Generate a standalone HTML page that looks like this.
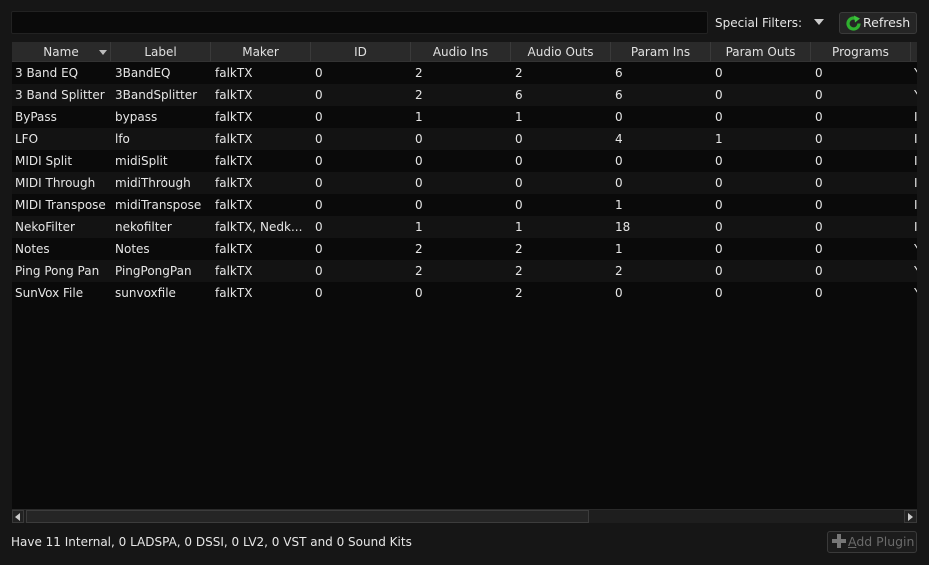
<!DOCTYPE html>
<html><head><style>
*{margin:0;padding:0;box-sizing:border-box}
body{width:929px;height:565px;background:#161616;font-family:"DejaVu Sans","Liberation Sans",sans-serif;font-size:12px;color:#e6e6e6;position:relative;overflow:hidden}
.a{position:absolute}
.search{left:11px;top:11px;width:697px;height:23px;background:#0a0a0a;border:1px solid #222;border-radius:2px}
.tbl{left:12px;top:42px;width:905px;height:468px;background:#0a0a0a;overflow:hidden}
.hdr{position:absolute;top:0;height:20px;background:#2a2a2a;border-right:1px solid #3a3a3a;border-bottom:1px solid #333;text-align:center;line-height:21px;color:#e0e0e0}
.row{position:absolute;left:0;width:905px;height:22px;line-height:22px}
.row.o{background:#131313}
.row span{position:absolute;white-space:nowrap}
.btn{border:1px solid #3a3a3a;border-radius:3px;background:#252525}
</style></head><body>
<div class="a search"></div>
<div class="a" style="left:715px;top:15px;line-height:16px">Special Filters:</div>
<div class="a" style="left:814px;top:19px;width:0;height:0;border-left:5px solid transparent;border-right:5px solid transparent;border-top:6px solid #ccc"></div>
<div class="a btn" style="left:839px;top:12px;width:78px;height:22px"></div>
<svg class="a" style="left:845px;top:15px" width="17" height="17" viewBox="0 0 17 17"><path d="M14 8.5A5.5 5.5 0 1 1 11 3.6" fill="none" stroke="#2fb02f" stroke-width="3.2"/><path d="M9 0.5L15 3.5L10 7.5Z" fill="#3cc43c"/></svg>
<div class="a" style="left:863px;top:15px;line-height:16px;font-size:12.5px">Refresh</div>
<div class="a tbl">
<div class="hdr" style="left:0;width:99px">Name</div>
<div class="a" style="left:87px;top:8px;border-left:4px solid transparent;border-right:4px solid transparent;border-top:5px solid #bbb"></div>
<div class="hdr" style="left:99px;width:100px">Label</div>
<div class="hdr" style="left:199px;width:100px">Maker</div>
<div class="hdr" style="left:299px;width:100px">ID</div>
<div class="hdr" style="left:399px;width:100px">Audio Ins</div>
<div class="hdr" style="left:499px;width:100px">Audio Outs</div>
<div class="hdr" style="left:599px;width:100px">Param Ins</div>
<div class="hdr" style="left:699px;width:100px">Param Outs</div>
<div class="hdr" style="left:799px;width:100px">Programs</div>
<div class="hdr" style="left:899px;width:10px"></div>
</div>
<div class="a" style="left:12px;top:62px;width:905px;height:242px;overflow:hidden">
<div class="row" style="top:0"><span style="left:3px">3 Band EQ</span><span style="left:103px">3BandEQ</span><span style="left:203px">falkTX</span><span style="left:303px">0</span><span style="left:403px">2</span><span style="left:503px">2</span><span style="left:603px">6</span><span style="left:703px">0</span><span style="left:803px">0</span><span style="left:902px">Y</span></div>
<div class="row o" style="top:22px"><span style="left:3px">3 Band Splitter</span><span style="left:103px">3BandSplitter</span><span style="left:203px">falkTX</span><span style="left:303px">0</span><span style="left:403px">2</span><span style="left:503px">6</span><span style="left:603px">6</span><span style="left:703px">0</span><span style="left:803px">0</span><span style="left:902px">Y</span></div>
<div class="row" style="top:44px"><span style="left:3px">ByPass</span><span style="left:103px">bypass</span><span style="left:203px">falkTX</span><span style="left:303px">0</span><span style="left:403px">1</span><span style="left:503px">1</span><span style="left:603px">0</span><span style="left:703px">0</span><span style="left:803px">0</span><span style="left:902px">I</span></div>
<div class="row o" style="top:66px"><span style="left:3px">LFO</span><span style="left:103px">lfo</span><span style="left:203px">falkTX</span><span style="left:303px">0</span><span style="left:403px">0</span><span style="left:503px">0</span><span style="left:603px">4</span><span style="left:703px">1</span><span style="left:803px">0</span><span style="left:902px">I</span></div>
<div class="row" style="top:88px"><span style="left:3px">MIDI Split</span><span style="left:103px">midiSplit</span><span style="left:203px">falkTX</span><span style="left:303px">0</span><span style="left:403px">0</span><span style="left:503px">0</span><span style="left:603px">0</span><span style="left:703px">0</span><span style="left:803px">0</span><span style="left:902px">I</span></div>
<div class="row o" style="top:110px"><span style="left:3px">MIDI Through</span><span style="left:103px">midiThrough</span><span style="left:203px">falkTX</span><span style="left:303px">0</span><span style="left:403px">0</span><span style="left:503px">0</span><span style="left:603px">0</span><span style="left:703px">0</span><span style="left:803px">0</span><span style="left:902px">I</span></div>
<div class="row" style="top:132px"><span style="left:3px">MIDI Transpose</span><span style="left:103px">midiTranspose</span><span style="left:203px">falkTX</span><span style="left:303px">0</span><span style="left:403px">0</span><span style="left:503px">0</span><span style="left:603px">1</span><span style="left:703px">0</span><span style="left:803px">0</span><span style="left:902px">I</span></div>
<div class="row o" style="top:154px"><span style="left:3px">NekoFilter</span><span style="left:103px">nekofilter</span><span style="left:203px">falkTX, Nedk...</span><span style="left:303px">0</span><span style="left:403px">1</span><span style="left:503px">1</span><span style="left:603px">18</span><span style="left:703px">0</span><span style="left:803px">0</span><span style="left:902px">I</span></div>
<div class="row" style="top:176px"><span style="left:3px">Notes</span><span style="left:103px">Notes</span><span style="left:203px">falkTX</span><span style="left:303px">0</span><span style="left:403px">2</span><span style="left:503px">2</span><span style="left:603px">1</span><span style="left:703px">0</span><span style="left:803px">0</span><span style="left:902px">Y</span></div>
<div class="row o" style="top:198px"><span style="left:3px">Ping Pong Pan</span><span style="left:103px">PingPongPan</span><span style="left:203px">falkTX</span><span style="left:303px">0</span><span style="left:403px">2</span><span style="left:503px">2</span><span style="left:603px">2</span><span style="left:703px">0</span><span style="left:803px">0</span><span style="left:902px">Y</span></div>
<div class="row" style="top:220px"><span style="left:3px">SunVox File</span><span style="left:103px">sunvoxfile</span><span style="left:203px">falkTX</span><span style="left:303px">0</span><span style="left:403px">0</span><span style="left:503px">2</span><span style="left:603px">0</span><span style="left:703px">0</span><span style="left:803px">0</span><span style="left:902px">Y</span></div>
</div>
<div class="a" style="left:12px;top:509px;width:905px;height:14px;background:#1e1e1e;border-top:1px solid #2a2a2a"></div>
<div class="a" style="left:12px;top:510px;width:12px;height:13px;border:1px solid #3a3a3a;background:#222"></div>
<div class="a" style="left:15px;top:513px;border-top:4px solid transparent;border-bottom:4px solid transparent;border-right:5px solid #ccc"></div>
<div class="a" style="left:26px;top:510px;width:563px;height:13px;border:1px solid #3c3c3c;background:#252525"></div>
<div class="a" style="left:904px;top:510px;width:13px;height:13px;border:1px solid #3a3a3a;background:#222"></div>
<div class="a" style="left:908px;top:513px;border-top:4px solid transparent;border-bottom:4px solid transparent;border-left:5px solid #ccc"></div>
<div class="a" style="left:11px;top:534px;line-height:16px">Have 11 Internal, 0 LADSPA, 0 DSSI, 0 LV2, 0 VST and 0 Sound Kits</div>
<div class="a btn" style="left:827px;top:531px;width:90px;height:22px;background:#1c1c1c"></div>
<div class="a" style="left:832px;top:539px;width:14px;height:4px;background:#777"></div>
<div class="a" style="left:837px;top:534px;width:4px;height:14px;background:#777"></div>
<div class="a" style="left:848px;top:534px;line-height:16px;color:#6a6a6a;font-size:12.5px"><u>A</u>dd Plugin</div>
</body></html>
